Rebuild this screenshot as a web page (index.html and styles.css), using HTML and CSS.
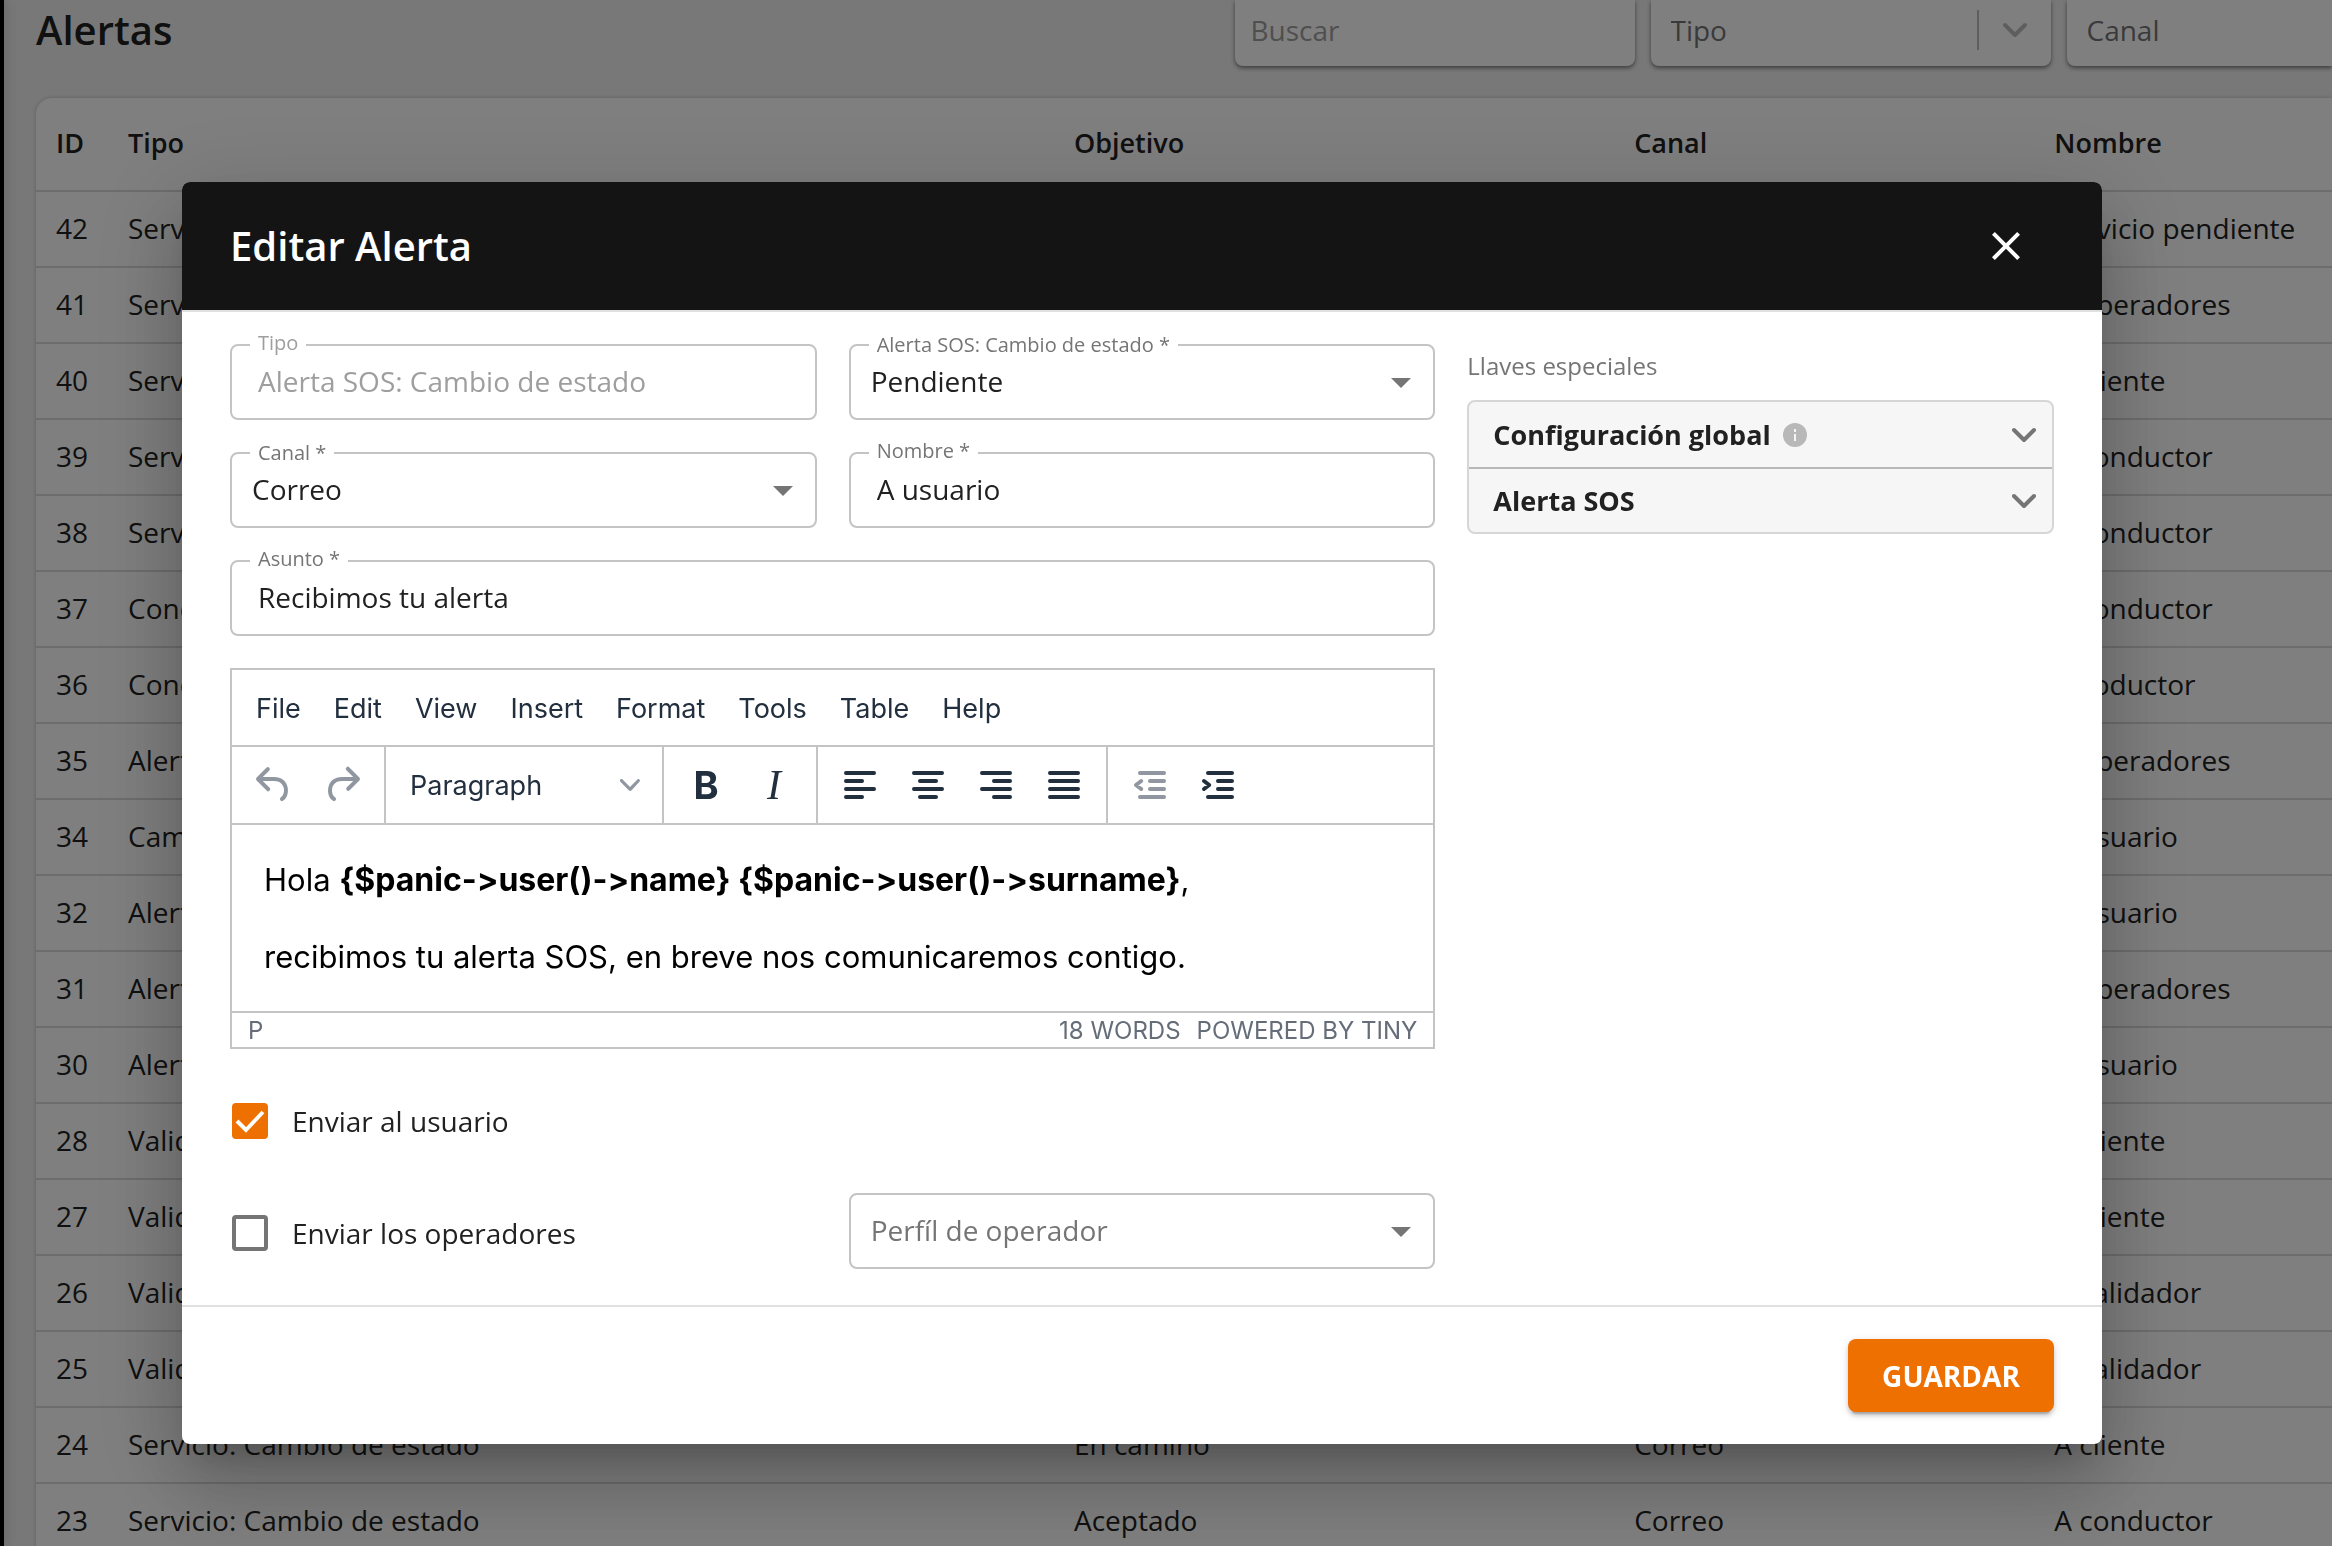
FILE: index.html
```html
<!DOCTYPE html>
<html lang="es">
<head>
<meta charset="utf-8">
<title>Alertas</title>
<link rel="stylesheet" href="styles.css">
</head>
<body>
<div class="app">
  <aside class="sidebar"></aside>
  <main class="page">
    <header class="page-head">
      <h1 class="page-title">Alertas</h1>
      <input class="filter filter-search" type="text" placeholder="Buscar" aria-label="Buscar">
      <div class="filter filter-select">
        <select class="filter-text" aria-label="Tipo"><option>Tipo</option></select>
        <svg class="chevron" viewBox="0 0 24 16"><path d="M2 3l10 10L22 3"/></svg>
      </div>
      <div class="filter filter-last"><select class="filter-text" aria-label="Canal"><option>Canal</option></select></div>
    </header>
    <table class="alerts">
      <colgroup><col class="col-id"><col class="col-type"><col class="col-target"><col class="col-channel"><col></colgroup>
      <thead>
        <tr><th>ID</th><th>Tipo</th><th>Objetivo</th><th>Canal</th><th>Nombre</th></tr>
      </thead>
      <tbody>
        <tr><td>42</td><td>Servicio</td><td></td><td></td><td>Servicio pendiente</td></tr>
        <tr><td>41</td><td>Servicio</td><td></td><td></td><td>A operadores</td></tr>
        <tr><td>40</td><td>Servicio</td><td></td><td></td><td>A cliente</td></tr>
        <tr><td>39</td><td>Servicio</td><td></td><td></td><td>A conductor</td></tr>
        <tr><td>38</td><td>Servicio</td><td></td><td></td><td>A conductor</td></tr>
        <tr><td>37</td><td>Conductor</td><td></td><td></td><td>A conductor</td></tr>
        <tr><td>36</td><td>Conductor</td><td></td><td></td><td>A coductor</td></tr>
        <tr><td>35</td><td>Alerta</td><td></td><td></td><td>A operadores</td></tr>
        <tr><td>34</td><td>Cambio</td><td></td><td></td><td>A usuario</td></tr>
        <tr><td>32</td><td>Alerta</td><td></td><td></td><td>A usuario</td></tr>
        <tr><td>31</td><td>Alerta</td><td></td><td></td><td>A operadores</td></tr>
        <tr><td>30</td><td>Alerta</td><td></td><td></td><td>A usuario</td></tr>
        <tr><td>28</td><td>Validador</td><td></td><td></td><td>A cliente</td></tr>
        <tr><td>27</td><td>Validador</td><td></td><td></td><td>A cliente</td></tr>
        <tr><td>26</td><td>Validador</td><td></td><td></td><td>A validador</td></tr>
        <tr><td>25</td><td>Validador</td><td></td><td></td><td>A validador</td></tr>
        <tr><td>24</td><td>Servicio: Cambio de estado</td><td>En camino</td><td>Correo</td><td>A cliente</td></tr>
        <tr><td>23</td><td>Servicio: Cambio de estado</td><td>Aceptado</td><td>Correo</td><td>A conductor</td></tr>
      </tbody>
    </table>
  </main>
</div>

<div class="backdrop">
  <form class="dialog" role="dialog" aria-labelledby="dialog-title">
    <header class="dialog-head">
      <h2 class="dialog-title" id="dialog-title">Editar Alerta</h2>
      <button class="close" type="button" aria-label="Cerrar">
        <svg viewBox="0 0 24 24" width="48" height="48"><path fill="currentColor" d="M19 6.41L17.59 5 12 10.59 6.41 5 5 6.41 10.59 12 5 17.59 6.41 19 12 13.41 17.59 19 19 17.59 13.41 12z"/></svg>
      </button>
    </header>

    <div class="dialog-body">
      <div class="fields">
        <div class="field is-text is-disabled">
          <label for="f-tipo">Tipo</label>
          <input id="f-tipo" type="text" value="Alerta SOS: Cambio de estado" disabled>
        </div>
        <div class="field is-select">
          <label for="f-estado">Alerta SOS: Cambio de estado *</label>
          <select id="f-estado"><option>Pendiente</option></select>
          <svg class="caret" viewBox="0 0 20 10"><path d="M0 0h20L10 10z"/></svg>
        </div>
        <div class="field is-select">
          <label for="f-canal">Canal *</label>
          <select id="f-canal"><option>Correo</option></select>
          <svg class="caret" viewBox="0 0 20 10"><path d="M0 0h20L10 10z"/></svg>
        </div>
        <div class="field is-text">
          <label for="f-nombre">Nombre *</label>
          <input id="f-nombre" type="text" value="A usuario">
        </div>
        <div class="field is-text is-wide">
          <label for="f-asunto">Asunto *</label>
          <input id="f-asunto" type="text" value="Recibimos tu alerta">
        </div>

        <section class="editor is-wide">
          <nav class="menubar">
            <button type="button">File</button>
            <button type="button">Edit</button>
            <button type="button">View</button>
            <button type="button">Insert</button>
            <button type="button">Format</button>
            <button type="button">Tools</button>
            <button type="button">Table</button>
            <button type="button">Help</button>
          </nav>
          <div class="toolbar">
            <div class="tool-group">
              <button class="tool" type="button" aria-label="Undo" disabled><svg viewBox="0 0 24 24"><path fill="currentColor" d="M6.4 8H12c3.7 0 6.2 2 6.8 5.1.6 2.7-.4 5.6-2.3 6.8a1 1 0 0 1-1-1.8c1.1-.6 1.8-2.7 1.4-4.6-.5-2.1-2.1-3.5-4.9-3.5H6.4l3.3 3.3a1 1 0 1 1-1.4 1.4l-5-5a1 1 0 0 1 0-1.4l5-5a1 1 0 0 1 1.4 1.4L6.4 8Z"/></svg></button>
              <button class="tool" type="button" aria-label="Redo" disabled><svg viewBox="0 0 24 24"><path fill="currentColor" d="M17.6 10H12c-2.8 0-4.4 1.4-4.9 3.5-.4 2 .3 4 1.4 4.6a1 1 0 1 1-1 1.8c-2-1.2-2.9-4.1-2.3-6.8.6-3 3-5.1 6.8-5.1h5.6l-3.3-3.3a1 1 0 1 1 1.4-1.4l5 5a1 1 0 0 1 0 1.4l-5 5a1 1 0 0 1-1.4-1.4l3.3-3.3Z"/></svg></button>
            </div>
            <div class="tool-group">
              <div class="block-select">
                <select aria-label="Blocks"><option>Paragraph</option></select>
                <svg viewBox="0 0 10 10"><path fill="currentColor" d="M8.7 2.2c.3-.3.8-.3 1 0 .4.4.4.9 0 1.2L5.7 7.8c-.3.3-.9.3-1.2 0L.2 3.4a.8.8 0 0 1 0-1.2c.3-.3.8-.3 1.1 0L5 6l3.7-3.8Z"/></svg>
              </div>
            </div>
            <div class="tool-group">
              <button class="tool tool-bold" type="button" aria-label="Bold">B</button>
              <button class="tool tool-italic" type="button" aria-label="Italic">I</button>
            </div>
            <div class="tool-group">
              <button class="tool" type="button" aria-label="Align left"><svg class="lines" viewBox="0 0 24 24"><path d="M5 6h14M5 10h8M5 14h14M5 18h8"/></svg></button>
              <button class="tool" type="button" aria-label="Align center"><svg class="lines" viewBox="0 0 24 24"><path d="M5 6h14M8 10h8M5 14h14M8 18h8"/></svg></button>
              <button class="tool" type="button" aria-label="Align right"><svg class="lines" viewBox="0 0 24 24"><path d="M5 6h14M11 10h8M5 14h14M11 18h8"/></svg></button>
              <button class="tool" type="button" aria-label="Justify"><svg class="lines" viewBox="0 0 24 24"><path d="M5 6h14M5 10h14M5 14h14M5 18h14"/></svg></button>
            </div>
            <div class="tool-group">
              <button class="tool" type="button" aria-label="Decrease indent" disabled><svg class="lines" viewBox="0 0 24 24"><path d="M7 6h12M12 10h7M12 14h7M7 18h12M7.6 10L5 12l2.6 2"/></svg></button>
              <button class="tool" type="button" aria-label="Increase indent"><svg class="lines" viewBox="0 0 24 24"><path d="M7 6h12M12 10h7M12 14h7M7 18h12M5 10l2.6 2L5 14"/></svg></button>
            </div>
          </div>
          <div class="editor-content">
            <p>Hola <strong>{$panic-&gt;user()-&gt;name} {$panic-&gt;user()-&gt;surname}</strong>,</p>
            <p>recibimos tu alerta SOS, en breve nos comunicaremos contigo.</p>
          </div>
          <footer class="statusbar">
            <span class="path">P</span>
            <span>18 WORDS</span>
            <span>POWERED BY TINY</span>
          </footer>
        </section>

        <label class="check is-wide">
          <span class="box">
            <input type="checkbox" checked>
            <svg viewBox="0 0 36 36"><path d="M5 18l9 9L31 9"/></svg>
          </span>
          Enviar al usuario
        </label>
        <label class="check">
          <span class="box"><input type="checkbox"></span>
          Enviar los operadores
        </label>
        <div class="field is-select is-empty">
          <select aria-label="Perfíl de operador"><option>Perfíl de operador</option></select>
          <svg class="caret" viewBox="0 0 20 10"><path d="M0 0h20L10 10z"/></svg>
        </div>
      </div>

      <aside class="keys">
        <h3 class="keys-title">Llaves especiales</h3>
        <div class="accordion">
          <button type="button">Configuración global
            <svg class="info" viewBox="0 0 24 24"><circle cx="12" cy="12" r="12"/><path d="M11 6h2v3h-2zM11 11h2v7h-2z"/></svg>
            <svg class="chevron" viewBox="0 0 24 16"><path d="M2 3l10 10L22 3"/></svg>
          </button>
          <button type="button">Alerta SOS
            <svg class="chevron" viewBox="0 0 24 16"><path d="M2 3l10 10L22 3"/></svg>
          </button>
        </div>
      </aside>
    </div>

    <footer class="dialog-foot">
      <button class="save" type="submit">GUARDAR</button>
    </footer>
  </form>
</div>
</body>
</html>
```
FILE: styles.css
```css
* { box-sizing: border-box; }

body {
  margin: 0;
  height: 100vh;
  overflow: hidden;
  background: #f0f0f0;
  color: #212121;
  font: 400 28px/40px "Open Sans", "Noto Sans", sans-serif;
}

h1, h2, h3, p { margin: 0; }
button, input, select { font: inherit; color: inherit; }
button { padding: 0; border: 0; background: none; }

/* Page behind the dialog */
.app { display: flex; height: 100vh; overflow: hidden; }
.sidebar { flex: 0 0 4px; background: #000; box-shadow: 0 0 12px rgba(0, 0, 0, .3); }
.page { flex: 1; min-width: 0; padding-left: 32px; }

.page-head { display: flex; gap: 16px; height: 66px; margin-bottom: 32px; }
.page-title {
  flex: 0 0 calc(52.2% - 16px);
  font-size: 40px;
  font-weight: 600;
  line-height: 60px;
}
.filter {
  flex: 0 0 400px;
  display: flex;
  align-items: center;
  min-width: 0;
  padding: 0 20px 6px;
  border: 0;
  border-radius: 0 0 8px 8px;
  background: #fff;
  box-shadow: 0 2px 4px rgba(0, 0, 0, .5);
}
.filter-search { padding-left: 16px; }
.filter-search::placeholder { color: #9e9e9e; opacity: 1; }
.filter-text { appearance: none; flex: 1; min-width: 0; padding: 0; border: 0; background: none; color: #757575; }
.filter-select { padding-right: 24px; }
.filter-select .chevron { width: 50px; height: 40px; padding-left: 24px; border-left: 2px solid #bdbdbd; color: #bdbdbd; }
.filter-last { flex: 1; border-radius: 0 0 0 8px; }

.chevron { fill: none; stroke: currentColor; stroke-width: 4; stroke-linecap: round; stroke-linejoin: round; width: 24px; height: 16px; }

.alerts {
  width: 100%;
  table-layout: fixed;
  border-collapse: separate;
  border-spacing: 0;
  border-radius: 16px 0 0 0;
  background: #fff;
  box-shadow: 0 0 4px rgba(0, 0, 0, .2);
  white-space: nowrap;
}
.col-id { width: 72px; }
.col-type { width: 41.2%; }
.col-target { width: 24.4%; }
.col-channel { width: 18.3%; }
.alerts th, .alerts td { height: 76px; padding: 0 20px 2px; border-bottom: 2px solid #dadada; text-align: left; }
.alerts th { height: 94px; font-size: 27px; font-weight: 600; }

/* Dialog */
.backdrop {
  position: fixed;
  inset: 0;
  display: flex;
  align-items: flex-start;
  padding: 182px 230px 0 182px;
  background: rgba(0, 0, 0, .5);
}
.dialog {
  flex: 1;
  min-width: 0;
  border-radius: 8px;
  background: #fff;
  box-shadow: 0 22px 30px -14px rgba(0, 0, 0, .2), 0 48px 76px 6px rgba(0, 0, 0, .14), 0 18px 92px 16px rgba(0, 0, 0, .12);
}
.dialog-head {
  display: flex;
  align-items: center;
  justify-content: space-between;
  height: 128px;
  padding: 0 48px;
  border-radius: 8px 8px 0 0;
  background: #141414;
  color: #fff;
}
.dialog-title { font-size: 40px; font-weight: 600; line-height: 60px; }
.close { display: grid; place-items: center; width: 96px; height: 96px; }

.dialog-body {
  display: grid;
  grid-template-columns: calc((200% - 32px) / 3) 1fr;
  gap: 32px;
  padding: 32px 48px;
  border-top: 2px solid #e0e0e0;
  border-bottom: 2px solid #e0e0e0;
}
.fields { display: grid; grid-template-columns: 1fr 1fr; gap: 32px; align-items: start; }
.is-wide { grid-column: 1 / -1; }

.field { position: relative; height: 76px; }
.field input, .field select {
  appearance: none;
  width: 100%;
  height: 76px;
  padding: 0 60px 2px 20px;
  border: 2px solid #c4c4c4;
  border-radius: 8px;
  background: #fff;
  opacity: 1;
}
.field.is-text input { padding: 0 26px 2px; }
.field label {
  position: absolute;
  left: 20px;
  top: -11px;
  padding: 0 8px;
  background: #fff;
  color: #757575;
  font-size: 20px;
  line-height: 24px;
}
.field.is-text label { top: -13px; }
.field.is-disabled label, .field.is-disabled input { color: #9e9e9e; }
.field.is-empty select { color: #757575; }
.caret { position: absolute; right: 24px; top: 34px; width: 20px; height: 10px; fill: #757575; pointer-events: none; }

/* Rich text editor */
.editor { border: 2px solid #c4c4c4; color: #222f3e; font: 400 27px/40px Inter, "Liberation Sans", sans-serif; }
.menubar { display: flex; gap: 33px; height: 77px; padding: 2px 24px 0; border-bottom: 2px solid #c4c4c4; }
.toolbar { display: flex; height: 78px; border-bottom: 2px solid #c4c4c4; }
.tool-group { display: flex; padding: 0 8px; border-right: 2px solid #c4c4c4; }
.tool-group:last-child { border-right: 0; }
.tool { display: grid; place-items: center; width: 68px; }
.tool svg { width: 48px; height: 48px; }
.tool:disabled { color: #9097a0; }
.tool-bold { font-size: 38px; font-weight: 700; }
.tool-italic { font: italic 42px/48px "Liberation Serif", serif; }
.lines { fill: none; stroke: currentColor; stroke-width: 2; stroke-linecap: round; stroke-linejoin: round; }
.block-select { position: relative; width: 260px; }
.block-select select { appearance: none; width: 100%; height: 100%; padding: 2px 16px 0; border: 0; background: none; }
.block-select svg { position: absolute; right: 14px; top: 28px; width: 20px; height: 20px; color: #9097a0; pointer-events: none; }
.editor-content { display: grid; gap: 32px; padding: 32px; color: #000; font-size: 31px; line-height: 45px; font-variant-ligatures: none; }
.editor-content strong { font-size: 32px; }
.statusbar {
  display: flex;
  gap: 16px;
  height: 36px;
  padding: 0 16px;
  border-top: 2px solid #c4c4c4;
  color: #646d78;
  font-size: 24px;
  line-height: 36px;
}
.path { flex: 1; }

/* Tick boxes */
.check { display: flex; align-items: center; gap: 24px; height: 80px; padding-left: 2px; }
.box { display: grid; width: 36px; height: 36px; }
.box > * { grid-area: 1 / 1; width: 36px; height: 36px; }
.box input { appearance: none; margin: 0; border: 4px solid #757575; border-radius: 4px; background: #fff; }
.box input:checked { border-color: #ee7000; background: #ee7000; }
.box svg { z-index: 1; fill: none; stroke: #fff; stroke-width: 4; pointer-events: none; }

/* Special keys */
.keys-title { padding-top: 2px; margin-bottom: 14px; color: #757575; font-size: 24px; font-weight: 400; line-height: 40px; }
.accordion { border: 2px solid #d6d6d6; border-radius: 8px; background: #f6f6f6; overflow: hidden; }
.accordion button { display: flex; align-items: center; gap: 12px; width: 100%; height: 65px; padding: 0 16px 0 24px; font-size: 27px; font-weight: 700; }
.accordion button + button { border-top: 2px solid #b8b8b8; }
.accordion .chevron { margin-left: auto; color: #757575; }
.info { width: 24px; height: 24px; fill: #b8b8b8; }
.info path { fill: #f6f6f6; }

.dialog-foot { display: flex; justify-content: flex-end; padding: 32px 48px; }
.save {
  width: 206px;
  height: 73px;
  border-radius: 8px;
  background: #ee7000;
  color: #fff;
  font-weight: 700;
  box-shadow: 0 6px 2px -4px rgba(0, 0, 0, .2), 0 4px 4px rgba(0, 0, 0, .14), 0 2px 10px rgba(0, 0, 0, .12);
}
```
